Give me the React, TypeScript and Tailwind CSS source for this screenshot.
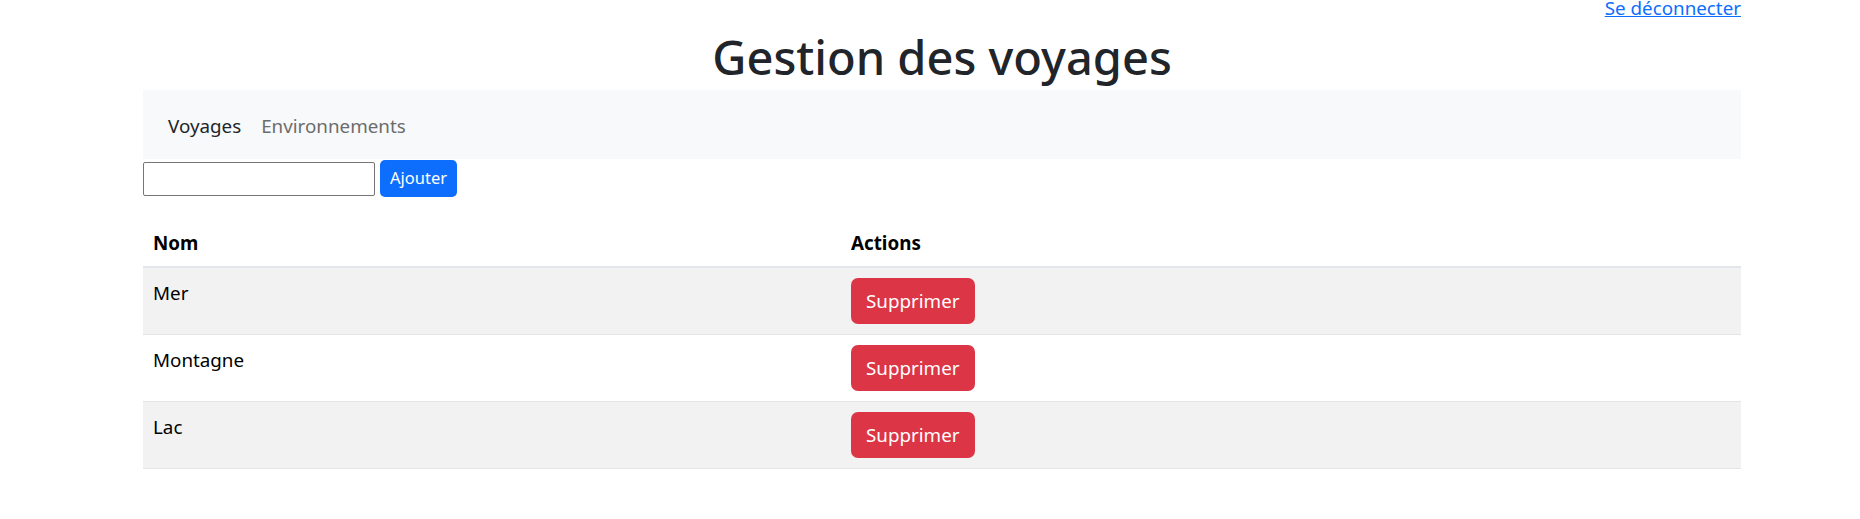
import React from "react";

const rows = ["Mer", "Montagne", "Lac"];

export default function App() {
  return (
    <div className="min-h-[519px] bg-white text-[#212529] font-['Noto_Sans',sans-serif]">
      <div className="ml-[143px] w-[1598px]">
        <div className="h-[14px] text-right text-[18.8px] leading-[16px]">
          <a href="#" className="text-[#0d6efd] underline">Se déconnecter</a>
        </div>
        <h1 className="h-[76px] pt-[13px] text-center text-[47px] font-medium leading-[60px]">Gestion des voyages</h1>
        <nav className="flex h-[69px] items-center bg-[#f8f9fa] px-[15px] pt-[3px] text-[18.8px] leading-[30px]">
          <a href="#" className="px-[10px] text-[#212529]">Voyages</a>
          <a href="#" className="px-[10px] text-[#6c6c6c]">Environnements</a>
        </nav>
        <div className="mt-[1px] flex items-center gap-[5px]">
          <input className="h-[34px] w-[232px] border border-[#767676] rounded-[2px] bg-white" />
          <button className="h-[37px] rounded-[5px] bg-[#0d6efd] px-[10px] text-[16.5px] text-white">Ajouter</button>
        </div>
        <div className="mt-[19px] text-[18.8px] leading-[30px]">
          <div className="grid grid-cols-[698px_1fr] border-b-[2px] border-[#e3e6ea]">
            <div className="px-[10px] pt-[12px] pb-[8px] font-bold text-black">Nom</div>
            <div className="px-[10px] pt-[12px] pb-[8px] font-bold text-black">Actions</div>
          </div>
          {rows.map((r, i) => (
            <div
              key={r}
              className={`grid grid-cols-[698px_1fr] border-b border-[#e5e5e5] ${i % 2 === 0 ? "bg-[#f2f2f2]" : "bg-white"}`}
            >
              <div className="px-[10px] py-[10px] text-black">{r}</div>
              <div className="px-[10px] py-[10px]">
                <button className="h-[46px] rounded-[7px] bg-[#dc3545] px-[15px] text-[18.8px] leading-[30px] text-white">Supprimer</button>
              </div>
            </div>
          ))}
        </div>
      </div>
    </div>
  );
}
